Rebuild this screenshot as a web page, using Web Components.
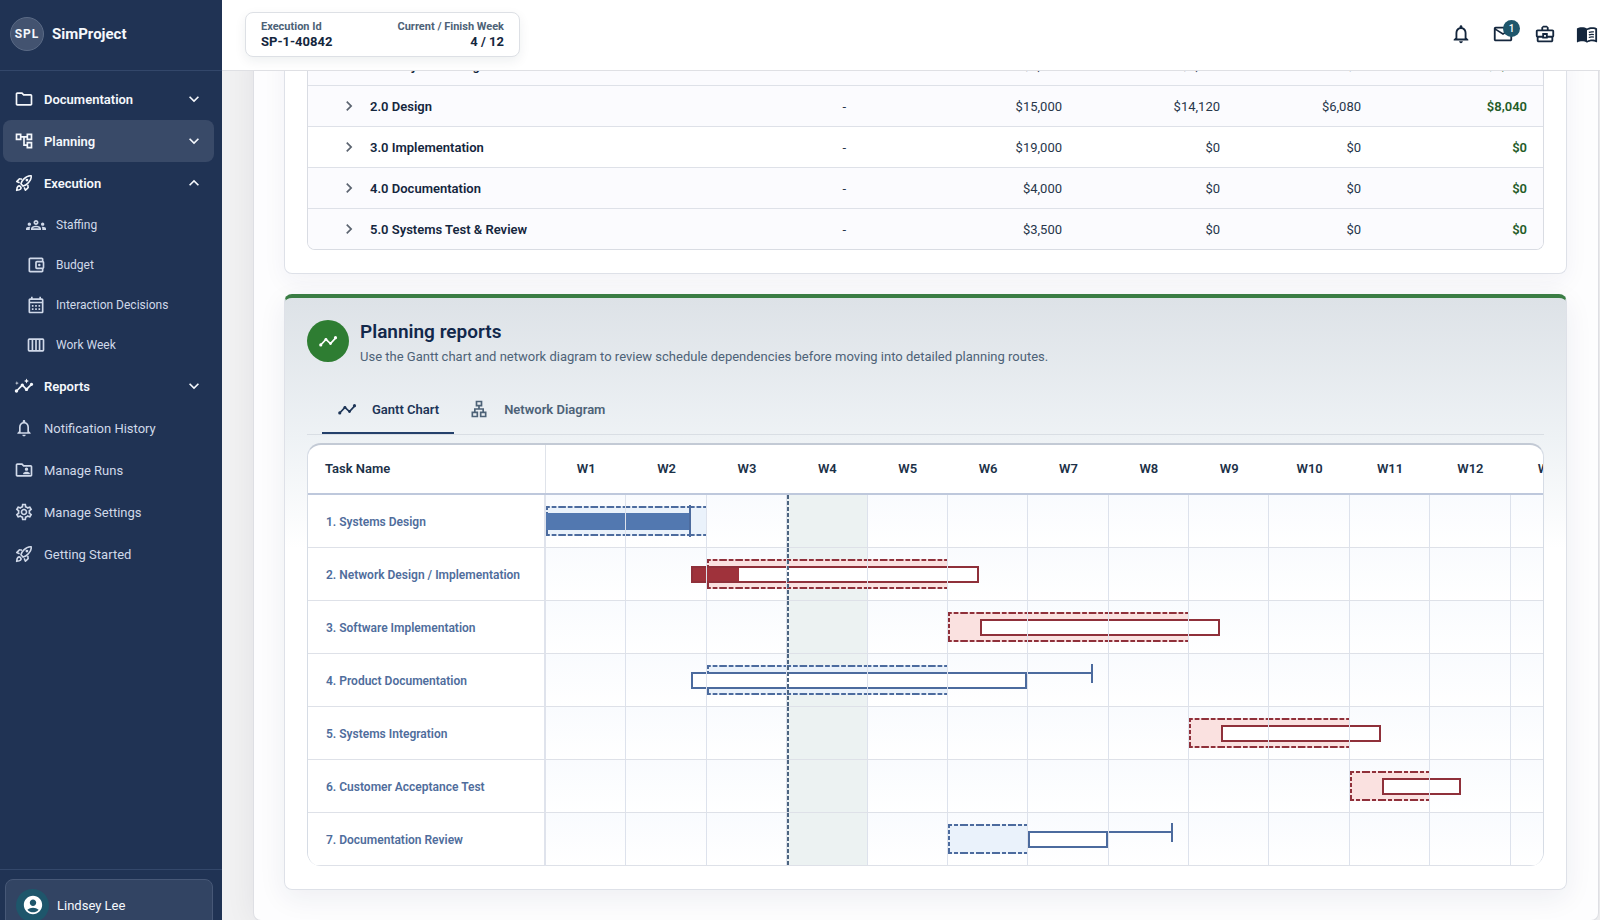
<!DOCTYPE html>
<html lang="en">
<head>
<meta charset="utf-8">
<meta name="viewport" content="width=device-width, initial-scale=1">
<title>SimProject</title>
<style>
    :root {
        --navy: #203354;
        --ink: #14263d;
        --muted: #4d6277;
        --line: #dee1e8;
        --blue: #4c6b9e;
        --blue-fill: #5278b0;
        --red: #8f303a;
        --red-fill: #9f323b;
        --green: #2e7d32;
    }
    html, body {
        margin: 0;
        height: 100%;
        overflow: hidden;
        font-family: Roboto, "Liberation Sans", sans-serif;
        font-size: 13px;
        color: var(--ink);
    }
</style>
</head>
<body>
<sim-app>
    <sim-sidebar slot="sidebar">
        <nav-item icon="folder" group>Documentation</nav-item>
        <nav-item icon="tree" group active>Planning</nav-item>
        <nav-item icon="rocket" group open>Execution
            <nav-item slot="children" icon="groups" child>Staffing</nav-item>
            <nav-item slot="children" icon="wallet" child>Budget</nav-item>
            <nav-item slot="children" icon="calendar" child>Interaction Decisions</nav-item>
            <nav-item slot="children" icon="week" child>Work Week</nav-item>
        </nav-item>
        <nav-item icon="insights" group>Reports</nav-item>
        <nav-item icon="bell">Notification History</nav-item>
        <nav-item icon="shared">Manage Runs</nav-item>
        <nav-item icon="gear">Manage Settings</nav-item>
        <nav-item icon="rocket">Getting Started</nav-item>
    </sim-sidebar>
    <sim-header slot="header" execution="SP-1-40842" week="4 / 12"></sim-header>
    <budget-table></budget-table>
    <report-card heading="Planning reports" icon="timeline">
        <span slot="summary">Use the Gantt chart and network diagram to review schedule dependencies before moving into detailed planning routes.</span>
        <report-tabs></report-tabs>
        <gantt-chart></gantt-chart>
    </report-card>
</sim-app>

<script>
const ICONS = {
    folder: '<path d="M9.17 6l2 2H20v10H4V6h5.17M10 4H4c-1.1 0-2 .9-2 2v12c0 1.1.9 2 2 2h16c1.1 0 2-.9 2-2V8c0-1.1-.9-2-2-2h-8l-2-2z"/>',
    tree: '<path d="M22 11V3h-7v3H9V3H2v8h7V8h2v10h4v3h7v-8h-7v3h-2V8h2v3h7zM7 9H4V5h3v4zm10 6h3v4h-3v-4zm0-10h3v4h-3V5z"/>',
    rocket: '<g fill="none" stroke="currentColor" stroke-width="1.9" stroke-linejoin="round"><path d="M8.3 12.9C9 11 10 9 11.6 7.4c4.2-4.2 7.3-4.4 9-4.1.3 1.700.1 4.900-4.100 9.100-1.600 1.600-3.600 2.600-5.500 3.300z"/><path d="M9.600 7.500 7.200 7c-.4-.1-.8 0-1 .3L3.300 10.300l3.400 1.500M16.500 14.400l.5 2.400c.1.400 0 .8-.3 1l-3 2.900-1.500-3.400"/><path d="M3.200 20.800s.3-3.500 1.300-4.500a2.200 2.200 0 0 1 3.200 3.200c-1 1-4.500 1.300-4.500 1.300z"/></g><circle cx="15.500" cy="8.500" r="1.700"/>',
    groups: '<path d="M4 13c1.100 0 2-.9 2-2s-.9-2-2-2-2 .9-2 2 .9 2 2 2zm1.130 1.100c-.37-.06-.74-.1-1.130-.1-.99 0-1.930.21-2.780.58C.48 14.900 0 15.620 0 16.430V18h4.500v-1.610c0-.83.23-1.610.63-2.290zM20 13c1.100 0 2-.9 2-2s-.9-2-2-2-2 .9-2 2 .9 2 2 2zm4 3.430c0-.81-.48-1.530-1.220-1.850-.85-.37-1.790-.58-2.780-.58-.39 0-.76.04-1.130.1.4.68.63 1.460.63 2.290V18H24v-1.570zM16.240 13.650c-1.170-.52-2.610-.9-4.240-.9s-3.070.39-4.240.9C6.680 14.130 6 15.210 6 16.390V18h12v-1.610c0-1.180-.68-2.260-1.760-2.740zM8.070 16c.09-.23.13-.39.91-.69.97-.38 1.990-.56 3.020-.56s2.050.18 3.020.56c.77.3.81.46.91.69H8.070zM12 8c.55 0 1 .45 1 1s-.45 1-1 1-1-.45-1-1 .45-1 1-1m0-2c-1.660 0-3 1.340-3 3s1.340 3 3 3 3-1.340 3-3-1.340-3-3-3z"/>',
    wallet: '<path d="M21 7.280V5c0-1.100-.9-2-2-2H5c-1.110 0-2 .9-2 2v14c0 1.100.89 2 2 2h14c1.100 0 2-.9 2-2v-2.280c.59-.35 1-.98 1-1.720V9c0-.74-.41-1.370-1-1.720zM20 9v6h-7V9h7zM5 19V5h14v2h-6c-1.100 0-2 .9-2 2v6c0 1.100.9 2 2 2h6v2H5z"/><circle cx="16" cy="12" r="1.500"/>',
    calendar: '<path d="M19 4h-1V2h-2v2H8V2H6v2H5c-1.110 0-2 .9-2 2v14c0 1.100.89 2 2 2h14c1.100 0 2-.9 2-2V6c0-1.100-.9-2-2-2zm0 16H5V10h14v10zm0-12H5V6h14v2zM9 14H7v-2h2v2zm4 0h-2v-2h2v2zm4 0h-2v-2h2v2zm-8 4H7v-2h2v2zm4 0h-2v-2h2v2zm4 0h-2v-2h2v2z"/>',
    week: '<g fill="none" stroke="currentColor" stroke-width="2"><rect x="3" y="5" width="18" height="14" rx="1"/><path d="M7.700 5v14M12 5v14M16.300 5v14"/></g>',
    insights: '<path d="M21 8c-1.450 0-2.260 1.440-1.930 2.510l-3.550 3.560c-.3-.09-.74-.09-1.040 0l-2.550-2.550C12.270 10.450 11.460 9 10 9c-1.450 0-2.270 1.440-1.930 2.520l-4.560 4.550C2.440 15.740 1 16.550 1 18c0 1.100.9 2 2 2 1.450 0 2.260-1.440 1.930-2.510l4.550-4.560c.3.09.74.09 1.040 0l2.550 2.550C12.730 16.550 13.540 18 15 18c1.450 0 2.270-1.440 1.930-2.520l3.560-3.550C21.560 12.260 23 11.450 23 10c0-1.100-.9-2-2-2zM15 9l.94-2.070L18 6l-2.060-.93L15 3l-.92 2.070L12 6l2.080.93zM3.500 11L4 9l2-.5L4 8l-.5-2L3 8l-2 .5L3 9z"/>',
    bell: '<path d="M12 22c1.100 0 2-.9 2-2h-4c0 1.100.9 2 2 2zm6-6v-5c0-3.070-1.630-5.640-4.500-6.320V4c0-.83-.67-1.500-1.500-1.500s-1.500.67-1.500 1.500v.68C7.640 5.360 6 7.920 6 11v5l-2 2v1h16v-1l-2-2zm-2 1H8v-6c0-2.480 1.510-4.500 4-4.500s4 2.020 4 4.500v6z"/>',
    shared: '<path d="M20 6h-8l-2-2H4c-1.100 0-2 .9-2 2v12c0 1.100.9 2 2 2h16c1.100 0 2-.9 2-2V8c0-1.100-.9-2-2-2zm0 12H4V6h5.170l2 2H20v10zm-5-5c1.100 0 2-.9 2-2s-.9-2-2-2-2 .9-2 2 .9 2 2 2zm-4 4h8v-1c0-1.330-2.670-2-4-2s-4 .67-4 2v1z"/>',
    gear: '<path d="M19.430 12.980c.04-.32.07-.64.07-.98 0-.34-.03-.66-.07-.98l2.110-1.650c.19-.15.24-.42.12-.64l-2-3.460c-.09-.16-.26-.25-.44-.25-.06 0-.12.01-.17.03l-2.490 1c-.52-.4-1.080-.73-1.690-.98l-.38-2.650C14.460 2.180 14.250 2 14 2h-4c-.25 0-.46.18-.49.42l-.38 2.650c-.61.25-1.170.59-1.690.98l-2.490-1c-.06-.02-.12-.03-.18-.03-.17 0-.34.09-.43.25l-2 3.460c-.13.22-.07.49.12.64l2.110 1.650c-.04.32-.07.65-.07.98 0 .33.03.66.07.98l-2.110 1.650c-.19.15-.24.42-.12.64l2 3.460c.09.16.26.25.44.25.06 0 .12-.01.17-.03l2.490-1c.52.4 1.080.73 1.690.98l.38 2.650c.03.24.24.42.49.42h4c.25 0 .46-.18.49-.42l.38-2.650c.61-.25 1.170-.59 1.690-.98l2.490 1c.06.02.12.03.18.03.17 0 .34-.09.43-.25l2-3.460c.12-.22.07-.49-.12-.64l-2.110-1.650zm-1.980-1.710c.04.31.05.52.05.73 0 .21-.02.43-.05.73l-.14 1.130.89.7 1.080.84-.7 1.210-1.270-.51-1.040-.42-.9.68c-.43.32-.84.56-1.250.73l-1.060.43-.16 1.130-.2 1.350h-1.400l-.19-1.350-.16-1.130-1.060-.43c-.43-.18-.83-.41-1.230-.71l-.91-.7-1.060.43-1.270.51-.7-1.210 1.080-.84.89-.7-.14-1.130c-.03-.31-.05-.54-.05-.74s.02-.43.05-.73l.14-1.130-.89-.7-1.080-.84.7-1.210 1.270.51 1.040.42.9-.68c.43-.32.84-.56 1.250-.73l1.060-.43.16-1.130.2-1.350h1.390l.19 1.350.16 1.130 1.060.43c.43.18.83.41 1.230.71l.91.7 1.060-.43 1.270-.51.7 1.210-1.070.85-.89.7.14 1.130zM12 8c-2.210 0-4 1.790-4 4s1.790 4 4 4 4-1.790 4-4-1.790-4-4-4zm0 6c-1.100 0-2-.9-2-2s.9-2 2-2 2 .9 2 2-.9 2-2 2z"/>',
    down: '<path d="M16.590 8.590 12 13.170 7.410 8.590 6 10l6 6 6-6z"/>',
    up: '<path d="M12 8l-6 6 1.410 1.410L12 10.830l4.590 4.580L18 14z"/>',
    right: '<path d="M10 6 8.590 7.410 13.170 12l-4.580 4.590L10 18l6-6z"/>',
    timeline: '<path d="M3.500 16.500 9.500 10l5.500 5 6-6.500" fill="none" stroke="currentColor" stroke-width="2"/><circle cx="3.300" cy="16.700" r="1.900"/><circle cx="9.500" cy="10" r="1.700"/><circle cx="15" cy="15" r="1.700"/><circle cx="21" cy="8" r="1.900"/>',
    mail: '<path d="M22 6c0-1.100-.9-2-2-2H4c-1.100 0-2 .9-2 2v12c0 1.100.9 2 2 2h16c1.100 0 2-.9 2-2V6zm-2 0-8 5-8-5h16zm0 12H4V8l8 5 8-5v10z"/>',
    briefcase: '<path d="M20 7h-4V5l-2-2h-4L8 5v2H4c-1.100 0-2 .9-2 2v5c0 .75.4 1.380 1 1.730V19c0 1.110.89 2 2 2h14c1.110 0 2-.89 2-2v-3.280c.59-.35 1-.99 1-1.720V9c0-1.100-.9-2-2-2zM10 5h4v2h-4V5zM4 9h16v5h-5v-3H9v3H4V9zm9 6h-2v-2h2v2zm6 4H5v-3h4v1h6v-1h4v3z"/>',
    book: '<path d="M21 5c-1.110-.35-2.330-.5-3.500-.5-1.950 0-4.050.4-5.500 1.500-1.450-1.100-3.550-1.500-5.500-1.500S2.450 4.900 1 6v14.650c0 .25.25.5.5.5.1 0 .15-.05.25-.05C3.100 20.450 5.050 20 6.500 20c1.950 0 4.050.4 5.500 1.500 1.350-.85 3.800-1.500 5.500-1.500 1.650 0 3.350.3 4.750 1.050.1.05.15.05.25.05.25 0 .5-.25.5-.5V6c-.6-.45-1.250-.75-2-1zm0 13.500c-1.100-.35-2.300-.5-3.500-.5-1.700 0-4.150.65-5.500 1.500V8c1.350-.85 3.800-1.500 5.500-1.500 1.200 0 2.400.15 3.500.5v11.500z"/><path d="M14 10.200c1.600-.6 3.600-.8 5.500-.4M14 13c1.600-.6 3.600-.8 5.500-.4M14 15.800c1.600-.6 3.600-.8 5.500-.4" fill="none" stroke="currentColor" stroke-width="1.400"/>',
    account: '<path d="M12 2C6.480 2 2 6.480 2 12s4.480 10 10 10 10-4.480 10-10S17.520 2 12 2zm0 4c1.930 0 3.500 1.570 3.500 3.500S13.930 13 12 13s-3.500-1.570-3.500-3.500S10.070 6 12 6zm0 14c-2.030 0-4.430-.82-6.140-2.880C7.550 15.800 9.680 15 12 15s4.450.8 6.140 2.120C16.430 19.180 14.030 20 12 20z"/>',
    network: '<path d="M13 22h8v-7h-3v-4h-5V9h3V2H8v7h3v2H6v4H3v7h8v-7H8v-2h8v2h-3v7zM10 7V4h4v3h-4zM9 17v3H5v-3h4zm10 0v3h-4v-3h4z"/>'
};

class UiIcon extends HTMLElement {
    connectedCallback() {
        if (this.shadowRoot) return;
        this.attachShadow({ mode: 'open' }).innerHTML = `
            <style>
                :host { display: block; flex: none; width: var(--icon-size, 20px); height: var(--icon-size, 20px); }
                svg { display: block; width: 100%; height: 100%; fill: currentColor; }
            </style>
            <svg viewBox="0 0 24 24" aria-hidden="true">${ICONS[this.getAttribute('name')]}</svg>
        `;
    }
}

class NavItem extends HTMLElement {
    connectedCallback() {
        if (this.shadowRoot) return;
        const group = this.hasAttribute('group');
        const open = this.hasAttribute('open');
        const tag = group ? 'button' : 'a';
        const attrs = group ? `type="button" aria-expanded="${open}"` : 'href="#"';
        this.attachShadow({ mode: 'open' }).innerHTML = `
            <style>
                :host { display: block; }
                .item {
                    display: flex;
                    align-items: center;
                    gap: 10px;
                    box-sizing: border-box;
                    width: 100%;
                    height: 42px;
                    padding: 0 10px 0 11px;
                    border: 0;
                    border-radius: 8px;
                    background: none;
                    color: #d0d9e9;
                    font: inherit;
                    text-align: left;
                    text-decoration: none;
                    white-space: nowrap;
                }
                .label { flex: 1; }
                :host([group]) .item { color: #f5f8fc; font-weight: 600; }
                :host([active]) .item { background: #394a68; }
                :host([child]) .item { height: 40px; padding-left: 23px; font-size: 12px; }
                :host([open]) .children { padding-top: 1px; }
            </style>
            <${tag} class="item" ${attrs}>
                <ui-icon name="${this.getAttribute('icon')}"></ui-icon>
                <span class="label"><slot></slot></span>
                ${group ? `<ui-icon name="${open ? 'up' : 'down'}"></ui-icon>` : ''}
            </${tag}>
            <div class="children"><slot name="children"></slot></div>
        `;
    }
}

class SimSidebar extends HTMLElement {
    connectedCallback() {
        this.attachShadow({ mode: 'open' }).innerHTML = `
            <style>
                :host {
                    display: flex;
                    flex-direction: column;
                    height: calc(100vh + 21px);
                    background: var(--navy);
                    color: #f5f8fc;
                }
                .brand {
                    display: flex;
                    align-items: center;
                    gap: 8px;
                    box-sizing: border-box;
                    height: 71px;
                    padding: 0 0 2px 10px;
                    border-bottom: 1px solid #33476a;
                    font-size: 15px;
                    font-weight: 700;
                }
                .mark {
                    display: grid;
                    place-items: center;
                    box-sizing: border-box;
                    width: 34px;
                    height: 34px;
                    border: 1px solid #5a6a85;
                    border-radius: 50%;
                    background: #435370;
                    font-size: 12px;
                    letter-spacing: 1px;
                }
                nav { flex: 1; padding: 7px 8px 0 3px; }
                footer { padding: 9px 9px 10px 5px; border-top: 1px solid #33476a; }
                .user {
                    display: flex;
                    align-items: center;
                    gap: 8px;
                    box-sizing: border-box;
                    width: 100%;
                    height: 52px;
                    padding: 0 10px;
                    border: 1px solid #475877;
                    border-radius: 8px;
                    background: #324463;
                    color: inherit;
                    font: inherit;
                }
                .avatar {
                    --icon-size: 22px;
                    display: grid;
                    place-items: center;
                    width: 33px;
                    height: 33px;
                    border-radius: 50%;
                    background: #1e566b;
                    color: #fff;
                }
            </style>
            <div class="brand"><span class="mark">SPL</span><span>SimProject</span></div>
            <nav><slot></slot></nav>
            <footer>
                <button class="user" type="button">
                    <span class="avatar"><ui-icon name="account"></ui-icon></span>
                    <span>Lindsey Lee</span>
                </button>
            </footer>
        `;
    }
}

class SimHeader extends HTMLElement {
    connectedCallback() {
        this.attachShadow({ mode: 'open' }).innerHTML = `
            <style>
                :host {
                    display: flex;
                    align-items: center;
                    justify-content: space-between;
                    box-sizing: border-box;
                    height: 71px;
                    padding: 0 2px 2px 23px;
                    border-bottom: 1px solid #dfe0e4;
                    background: #fff;
                }
                dl {
                    display: flex;
                    justify-content: space-between;
                    align-items: center;
                    box-sizing: border-box;
                    width: 275px;
                    height: 45px;
                    margin: 0;
                    padding: 0 15px;
                    border: 1px solid #dde0e5;
                    border-radius: 8px;
                    background: #fff;
                    box-shadow: 0 4px 12px rgba(20, 38, 61, .07);
                }
                div:last-child { text-align: right; }
                dt { font-size: 11px; line-height: 14px; font-weight: 700; color: var(--muted); }
                dd { margin: 0; font-size: 13px; line-height: 15px; font-weight: 700; }
                .actions { display: flex; gap: 20px; }
                button {
                    --icon-size: 22px;
                    position: relative;
                    padding: 0;
                    border: 0;
                    background: none;
                    color: var(--ink);
                    font: inherit;
                }
                .badge {
                    position: absolute;
                    top: -3px;
                    right: -6px;
                    width: 17px;
                    height: 17px;
                    border-radius: 50%;
                    background: #1e566b;
                    color: #fff;
                    font-size: 10px;
                    line-height: 17px;
                    font-weight: 500;
                    text-align: center;
                }
            </style>
            <dl>
                <div><dt>Execution Id</dt><dd>${this.getAttribute('execution')}</dd></div>
                <div><dt>Current / Finish Week</dt><dd>${this.getAttribute('week')}</dd></div>
            </dl>
            <div class="actions">
                <button type="button" aria-label="Notifications"><ui-icon name="bell"></ui-icon></button>
                <button type="button" aria-label="Messages"><ui-icon name="mail"></ui-icon><span class="badge">1</span></button>
                <button type="button" aria-label="Toolbox"><ui-icon name="briefcase"></ui-icon></button>
                <button type="button" aria-label="Guide"><ui-icon name="book"></ui-icon></button>
            </div>
        `;
    }
}

class SimApp extends HTMLElement {
    connectedCallback() {
        this.attachShadow({ mode: 'open' }).innerHTML = `
            <style>
                :host {
                    display: grid;
                    grid-template-columns: 222px minmax(0, 1fr);
                    height: 100vh;
                    overflow: hidden;
                }
                .page { display: flex; flex-direction: column; min-width: 0; height: 100vh; }
                .scroll {
                    flex: 1;
                    min-height: 0;
                    overflow: hidden;
                    padding: 0 1px 0 31px;
                    background: #f1f1f2;
                }
                main {
                    display: flex;
                    flex-direction: column;
                    gap: 20px;
                    margin-top: -26px;
                    padding: 0 31px 30px 30px;
                    border: 1px solid #dedfe4;
                    border-top: 0;
                    border-radius: 0 0 8px 8px;
                    background: #fdfdfe;
                    box-shadow: 0 0 30px rgba(20, 30, 60, .07);
                }
            </style>
            <slot name="sidebar"></slot>
            <div class="page">
                <slot name="header"></slot>
                <div class="scroll"><main><slot></slot></main></div>
            </div>
        `;
    }
}

const BUDGET = [
    ['1.0 Project Testing', '-', '$9,000', '$8,160', '$0', '$8,160'],
    ['2.0 Design', '-', '$15,000', '$14,120', '$6,080', '$8,040'],
    ['3.0 Implementation', '-', '$19,000', '$0', '$0', '$0'],
    ['4.0 Documentation', '-', '$4,000', '$0', '$0', '$0'],
    ['5.0 Systems Test & Review', '-', '$3,500', '$0', '$0', '$0']
];

class BudgetTable extends HTMLElement {
    connectedCallback() {
        const rows = BUDGET.map(([name, ...cells]) => `
            <tr>
                <th scope="row"><div class="name">
                    <button type="button" aria-label="Expand row"><ui-icon name="right"></ui-icon></button>
                    ${name.replace('&', '&amp;')}
                </div></th>
                ${cells.map(cell => `<td>${cell}</td>`).join('')}
            </tr>`).join('');
        this.attachShadow({ mode: 'open' }).innerHTML = `
            <style>
                :host {
                    display: block;
                    padding: 0 22px 23px;
                    border: 1px solid var(--line);
                    border-top: 0;
                    border-radius: 0 0 8px 8px;
                    background: #fff;
                    box-shadow: 0 8px 24px rgba(30, 40, 90, .05);
                }
                .frame {
                    overflow: hidden;
                    border: 1px solid #d9dce3;
                    border-top: 0;
                    border-radius: 0 0 8px 8px;
                }
                table { width: 100%; table-layout: fixed; border-collapse: separate; border-spacing: 0; }
                th, td {
                    box-sizing: border-box;
                    height: 41px;
                    padding: 0 16px;
                    border-bottom: 1px solid var(--line);
                    text-align: right;
                }
                th { padding-left: 31px; font-weight: 600; }
                td { color: #27364a; }
                tr { background: #fbfbfe; }
                tr:nth-child(3) { background: #fff; }
                tr:last-child > * { height: 40px; border-bottom: 0; }
                td:last-child { color: #245c28; font-weight: 600; }
                .name { display: flex; align-items: center; gap: 11px; }
                button { padding: 0; border: 0; background: none; color: #5c6470; }
            </style>
            <div class="frame">
                <table>
                    <colgroup><col><col style="width:130px"><col style="width:216px"><col style="width:158px"><col style="width:141px"><col style="width:166px"></colgroup>
                    <tbody>${rows}</tbody>
                </table>
            </div>
        `;
    }
}

class ReportCard extends HTMLElement {
    connectedCallback() {
        this.attachShadow({ mode: 'open' }).innerHTML = `
            <style>
                :host {
                    display: block;
                    padding: 22px 22px 23px;
                    border: 1px solid var(--line);
                    border-top: 4px solid #3a7d44;
                    border-radius: 8px;
                    background: linear-gradient(#dde2e7, #eef2f5 140px, #fff 250px);
                    box-shadow: 0 8px 28px rgba(30, 40, 90, .07);
                }
                header { display: flex; gap: 11px; margin-bottom: 11px; }
                .badge {
                    display: grid;
                    place-items: center;
                    width: 42px;
                    height: 42px;
                    border-radius: 50%;
                    background: var(--green);
                    color: #fff;
                }
                h2 { margin: 0 0 3px; font-size: 19px; line-height: 24px; font-weight: 600; color: #12284b; }
                p { margin: 0; line-height: 20px; color: var(--muted); }
            </style>
            <header>
                <span class="badge"><ui-icon name="${this.getAttribute('icon')}"></ui-icon></span>
                <div>
                    <h2>${this.getAttribute('heading')}</h2>
                    <p><slot name="summary"></slot></p>
                </div>
            </header>
            <slot></slot>
        `;
    }
}

class ReportTabs extends HTMLElement {
    connectedCallback() {
        this.attachShadow({ mode: 'open' }).innerHTML = `
            <style>
                :host {
                    display: flex;
                    margin-bottom: 8px;
                    padding-left: 15px;
                    border-bottom: 1px solid #d9dee4;
                }
                button {
                    display: flex;
                    align-items: center;
                    gap: 15px;
                    height: 56px;
                    padding: 8px 15px 0;
                    border: 0;
                    border-bottom: 2px solid transparent;
                    background: none;
                    color: var(--muted);
                    font: inherit;
                    font-weight: 600;
                }
                button[aria-selected="true"] { border-color: #24406b; color: #1d3557; }
            </style>
            <button type="button" role="tab" aria-selected="true"><ui-icon name="timeline"></ui-icon>Gantt Chart</button>
            <button type="button" role="tab" aria-selected="false"><ui-icon name="network"></ui-icon>Network Diagram</button>
        `;
    }
}

// Every value is a day index on the timeline, five days to a week.
const WEEKS = 13;
const TASKS = [
    { name: '1. Systems Design', plan: [0, 10], bar: [0, 9], done: 9, tick: 9 },
    { name: '2. Network Design / Implementation', plan: [10, 25], bar: [9, 27], done: 3, critical: true },
    { name: '3. Software Implementation', plan: [25, 40], bar: [27, 42], critical: true },
    { name: '4. Product Documentation', plan: [10, 25], bar: [9, 30], slack: 34 },
    { name: '5. Systems Integration', plan: [40, 50], bar: [42, 52], critical: true },
    { name: '6. Customer Acceptance Test', plan: [50, 55], bar: [52, 57], critical: true },
    { name: '7. Documentation Review', plan: [25, 30], bar: [30, 35], slack: 39 }
];

const span = (from, to) => `grid-column: ${from + 1} / ${to + 1};`;

class GanttRow extends HTMLElement {
    set task(task) {
        const { plan, bar, done = 0, slack, tick } = task;
        const length = bar[1] - bar[0];
        this.toggleAttribute('critical', !!task.critical);
        this.attachShadow({ mode: 'open' }).innerHTML = `
            <style>
                :host {
                    --edge: var(--blue);
                    --fill: var(--blue-fill);
                    --tint: #eaf2fb;
                    display: grid;
                    grid-template-columns: 238px 1045px;
                    height: 53px;
                }
                :host([critical]) { --edge: var(--red); --fill: var(--red-fill); --tint: #fae1e0; }
                .name {
                    display: flex;
                    align-items: center;
                    box-sizing: border-box;
                    padding: 2px 0 0 18px;
                    border-right: 2px solid #dfe3ec;
                    border-bottom: 1px solid var(--line);
                    background: #fff;
                    color: #4f6d9c;
                    font-size: 12px;
                    font-weight: 600;
                    white-space: nowrap;
                }
                .track, .weeks { display: grid; min-width: 0; }
                .track {
                    grid-template-columns: repeat(${WEEKS * 5}, minmax(0, 1fr));
                    grid-template-rows: 53px;
                    background: linear-gradient(#f9fbfe, #fff);
                }
                .track > * { grid-row: 1; box-sizing: border-box; }
                .now { background: #ecf2f2; }
                .weeks { grid-template-columns: repeat(${WEEKS}, 1fr); border-bottom: 1px solid var(--line); }
                .weeks i { border-right: 1px solid #dde2ec; }
                .plan {
                    --dash: linear-gradient(90deg, var(--edge) 0 4px, transparent 4px 6px, var(--edge) 6px 10px, transparent 10px 12px, var(--edge) 12px);
                    height: 30px;
                    margin-top: 11px;
                    background:
                        var(--dash) 0 0 / calc(100% / var(--days)) 2px repeat-x,
                        var(--dash) 0 100% / calc(100% / var(--days)) 2px repeat-x,
                        repeating-linear-gradient(var(--edge) 0 4px, transparent 4px 6px) 0 0 / 2px 100% no-repeat,
                        var(--tint);
                }
                .bar {
                    height: 17px;
                    margin: 18px 1px 0 0;
                    border: 2px solid var(--edge);
                    background: linear-gradient(90deg, var(--fill) var(--done), #fff var(--done)) border-box;
                }
                .done { border-color: var(--fill); }
                .slack { height: 2px; margin-top: 18px; background: var(--edge); }
                .tick { justify-self: end; width: 2px; height: 19px; margin-top: 10px; background: var(--edge); }
                .tick.tall { height: 32px; }
                .marker {
                    width: 2px;
                    background: repeating-linear-gradient(#4c6480 0 4px, transparent 4px 6px);
                }
            </style>
            <div class="name">${task.name}</div>
            <div class="track">
                <div class="now" style="${span(15, 20)}"></div>
                <div class="plan" style="${span(...plan)} --days: ${plan[1] - plan[0]}"></div>
                <div class="bar ${done === length ? 'done' : ''}" style="${span(...bar)} --done: ${done / length * 100}%"></div>
                ${slack ? `<div class="slack" style="${span(bar[1], slack)}"></div><div class="tick" style="${span(slack - 1, slack)}"></div>` : ''}
                ${tick ? `<div class="tick tall" style="${span(tick - 1, tick)}"></div>` : ''}
                <div class="weeks" style="${span(0, WEEKS * 5)}">${'<i></i>'.repeat(WEEKS)}</div>
                <div class="marker" style="${span(15, 16)}"></div>
            </div>
        `;
    }
}

class GanttChart extends HTMLElement {
    connectedCallback() {
        const weeks = Array.from({ length: WEEKS }, (_, i) => `<span>W${i + 1}</span>`).join('');
        this.attachShadow({ mode: 'open' }).innerHTML = `
            <style>
                :host {
                    display: block;
                    overflow: hidden;
                    border: 1px solid #d6dce5;
                    border-top: 2px solid #c3cad5;
                    border-bottom: 0;
                    border-radius: 14px;
                    background: #fff;
                }
                .head {
                    display: grid;
                    grid-template-columns: 238px 1045px;
                    height: 48px;
                    border-bottom: 2px solid #bec8dc;
                    font-weight: 600;
                    line-height: 48px;
                    color: #1c3148;
                }
                .label { box-sizing: border-box; padding-left: 17px; border-right: 1px solid #dfe3ea; }
                .weeks { display: grid; grid-template-columns: repeat(${WEEKS}, 1fr); text-align: center; }
            </style>
            <div class="head"><div class="label">Task Name</div><div class="weeks">${weeks}</div></div>
        `;
        TASKS.forEach(task => {
            const row = document.createElement('gantt-row');
            row.task = task;
            this.shadowRoot.append(row);
        });
    }
}

customElements.define('ui-icon', UiIcon);
customElements.define('nav-item', NavItem);
customElements.define('sim-sidebar', SimSidebar);
customElements.define('sim-header', SimHeader);
customElements.define('sim-app', SimApp);
customElements.define('budget-table', BudgetTable);
customElements.define('report-card', ReportCard);
customElements.define('report-tabs', ReportTabs);
customElements.define('gantt-row', GanttRow);
customElements.define('gantt-chart', GanttChart);
</script>
</body>
</html>
